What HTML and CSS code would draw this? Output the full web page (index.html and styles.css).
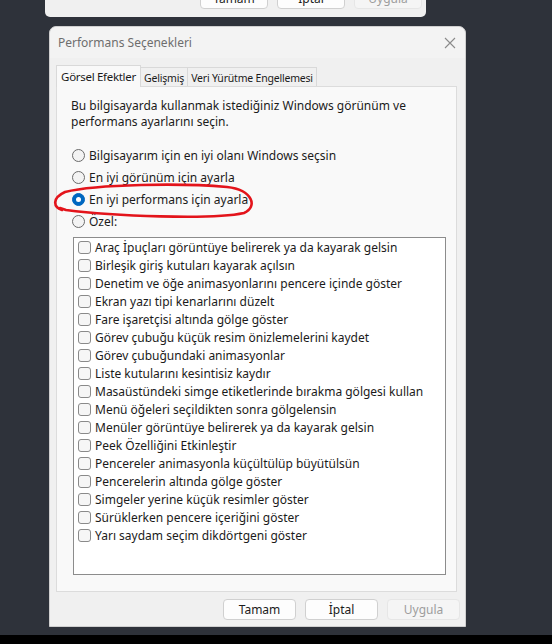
FILE: index.html
```html
<!DOCTYPE html>
<html lang="tr">
<head>
<meta charset="utf-8">
<title>Performans Seçenekleri</title>
<link rel="stylesheet" href="styles.css">
</head>
<body>
<div class="screen">
  <div class="behind">
    <button class="btn">Tamam</button>
    <button class="btn">İptal</button>
    <button class="btn disabled">Uygula</button>
  </div>
  <div class="dialog">
    <div class="titlebar">
      <span class="title">Performans Seçenekleri</span>
      <svg class="close" width="12" height="12" viewBox="0 0 12 12"><path d="M1 1L11 11M11 1L1 11" stroke="#8a8a8a" stroke-width="1.1" fill="none"/></svg>
    </div>
    <div class="tabs">
      <div class="tab active">Görsel Efektler</div>
      <div class="tab t2">Gelişmiş</div>
      <div class="tab t3">Veri Yürütme Engellemesi</div>
    </div>
    <div class="panel">
      <p class="intro">Bu bilgisayarda kullanmak istediğiniz Windows görünüm ve performans ayarlarını seçin.</p>
      <div class="radios">
        <div class="radio"><span class="rb"></span>Bilgisayarım için en iyi olanı Windows seçsin</div>
        <div class="radio"><span class="rb"></span>En iyi görünüm için ayarla</div>
        <div class="radio"><span class="rb checked"></span>En iyi performans için ayarla</div>
        <div class="radio"><span class="rb"></span>Özel:</div>
      </div>
      <div class="list">
        <div class="item"><span class="cb"></span>Araç İpuçları görüntüye belirerek ya da kayarak gelsin</div>
        <div class="item"><span class="cb"></span>Birleşik giriş kutuları kayarak açılsın</div>
        <div class="item"><span class="cb"></span>Denetim ve öğe animasyonlarını pencere içinde göster</div>
        <div class="item"><span class="cb"></span>Ekran yazı tipi kenarlarını düzelt</div>
        <div class="item"><span class="cb"></span>Fare işaretçisi altında gölge göster</div>
        <div class="item"><span class="cb"></span>Görev çubuğu küçük resim önizlemelerini kaydet</div>
        <div class="item"><span class="cb"></span>Görev çubuğundaki animasyonlar</div>
        <div class="item"><span class="cb"></span>Liste kutularını kesintisiz kaydır</div>
        <div class="item"><span class="cb"></span>Masaüstündeki simge etiketlerinde bırakma gölgesi kullan</div>
        <div class="item"><span class="cb"></span>Menü öğeleri seçildikten sonra gölgelensin</div>
        <div class="item"><span class="cb"></span>Menüler görüntüye belirerek ya da kayarak gelsin</div>
        <div class="item"><span class="cb"></span>Peek Özelliğini Etkinleştir</div>
        <div class="item"><span class="cb"></span>Pencereler animasyonla küçültülüp büyütülsün</div>
        <div class="item"><span class="cb"></span>Pencerelerin altında gölge göster</div>
        <div class="item"><span class="cb"></span>Simgeler yerine küçük resimler göster</div>
        <div class="item"><span class="cb"></span>Sürüklerken pencere içeriğini göster</div>
        <div class="item"><span class="cb"></span>Yarı saydam seçim dikdörtgeni göster</div>
      </div>
    </div>
    <div class="footer">
      <button class="btn">Tamam</button>
      <button class="btn">İptal</button>
      <button class="btn disabled">Uygula</button>
    </div>
    <svg class="scribble" width="210" height="40" viewBox="0 0 210 40">
      <path d="M10 27 C 1 24, 0 15, 13 9 C 45 1, 130 0, 175 4 C 201 7, 206 24, 192 30 C 160 37, 60 33, 14 27 L 8 25" fill="none" stroke="#e3141b" stroke-width="2.6" stroke-linecap="round" stroke-linejoin="round"/>
    </svg>
  </div>
  <div class="taskbar"></div>
</div>
</body>
</html>
```
FILE: styles.css
```css
* { box-sizing: border-box; }
html, body { margin: 0; padding: 0; }
body {
  background: #2e323a;
  font-family: "Noto Sans", "Liberation Sans", sans-serif;
  font-size: 12px;
  color: #1b1b1b;
}
.screen {
  width: 552px;
  height: 644px;
  position: relative;
  overflow: hidden;
  display: flex;
  flex-direction: column;
}
.behind {
  margin-left: 45px;
  width: 381px;
  height: 17px;
  background: #f0f0f0;
  border-radius: 0 0 5px 5px;
  display: flex;
  align-items: flex-end;
  justify-content: flex-end;
  gap: 9px;
  padding: 0 4px 8px 0;
  overflow: hidden;
  flex-shrink: 0;
}
.behind .btn { width: 68px; flex-shrink: 0; }
.dialog {
  margin-top: 9px;
  margin-left: 49px;
  width: 417px;
  height: 601px;
  background: #f0f0f0;
  border: 1px solid #cfcfcf;
  border-radius: 7px 7px 0 0;
  position: relative;
  display: flex;
  flex-direction: column;
  flex-shrink: 0;
}
.titlebar {
  height: 31px;
  background: #f3f3f3;
  border-radius: 7px 7px 0 0;
  display: flex;
  align-items: center;
  justify-content: space-between;
  padding: 0 9px 0 8px;
}
.title { color: #6e6e6e; font-size: 12px; }
.close { display: block; }
.tabs {
  display: flex;
  align-items: flex-end;
  margin: 7px 0 0 6px;
  height: 21px;
  position: relative;
  z-index: 1;
}
.tab {
  height: 19px;
  border: 1px solid #d9d9d9;
  border-bottom: none;
  border-left: none;
  background: #f0f0f0;
  display: flex;
  align-items: center;
  justify-content: center;
  font-size: 10.5px;
  letter-spacing: -0.2px;
  white-space: nowrap;
  padding-top: 1px;
}
.tab.active {
  width: 85px;
  height: 22px;
  margin-bottom: -1px;
  border-left: 1px solid #d9d9d9;
  background: #f9f9f9;
  font-size: 11.5px;
  letter-spacing: -0.3px;
  padding-top: 0;
}
.tab.t2 { width: 47px; }
.tab.t3 { width: 129px; }
.panel {
  margin: 0 8px 0 6px;
  height: 506px;
  background: #f9f9f9;
  border: 1px solid #dcdcdc;
  padding: 11px 10px 0 14px;
}
.intro {
  margin: 0;
  line-height: 16px;
  width: 345px;
}
.radios {
  margin-top: 14px;
  display: flex;
  flex-direction: column;
}
.radio {
  height: 22px;
  display: flex;
  align-items: center;
  gap: 4px;
}
.rb {
  width: 13px;
  height: 13px;
  border-radius: 50%;
  border: 1px solid #6b6b6b;
  background: #f3f3f3;
  flex-shrink: 0;
  position: relative;
  margin-left: 1px;
}
.rb.checked {
  background: #0067c0;
  border-color: #0067c0;
}
.rb.checked::after {
  content: "";
  position: absolute;
  left: 3px;
  top: 3px;
  width: 5px;
  height: 5px;
  border-radius: 50%;
  background: #fff;
}
.list {
  margin: 5px 0 0 2px;
  width: 373px;
  height: 338px;
  background: #fff;
  border: 1px solid #8c8c8c;
  padding: 0 4px;
}
.item {
  height: 18px;
  display: flex;
  align-items: center;
  gap: 4px;
  white-space: nowrap;
}
.cb {
  width: 13px;
  height: 13px;
  border: 1px solid #8a8a8a;
  border-radius: 3px;
  background: #f6f6f6;
  flex-shrink: 0;
}
.footer {
  display: flex;
  justify-content: flex-end;
  gap: 9px;
  padding: 7px 5px 0 0;
}
.btn {
  width: 73px;
  height: 21px;
  border: 1px solid #d0d0d0;
  border-radius: 4px;
  background: #fdfdfd;
  font-family: "Noto Sans", "Liberation Sans", sans-serif;
  font-size: 12px;
  color: #1b1b1b;
  padding: 0;
  display: flex;
  align-items: center;
  justify-content: center;
}
.btn.disabled {
  background: #f5f5f5;
  border-color: #e6e6e6;
  color: #9d9d9d;
}
.scribble {
  position: absolute;
  left: 2px;
  top: 156px;
}
.taskbar {
  margin-top: 8px;
  height: 9px;
  background: #000;
  flex-shrink: 0;
}
```
